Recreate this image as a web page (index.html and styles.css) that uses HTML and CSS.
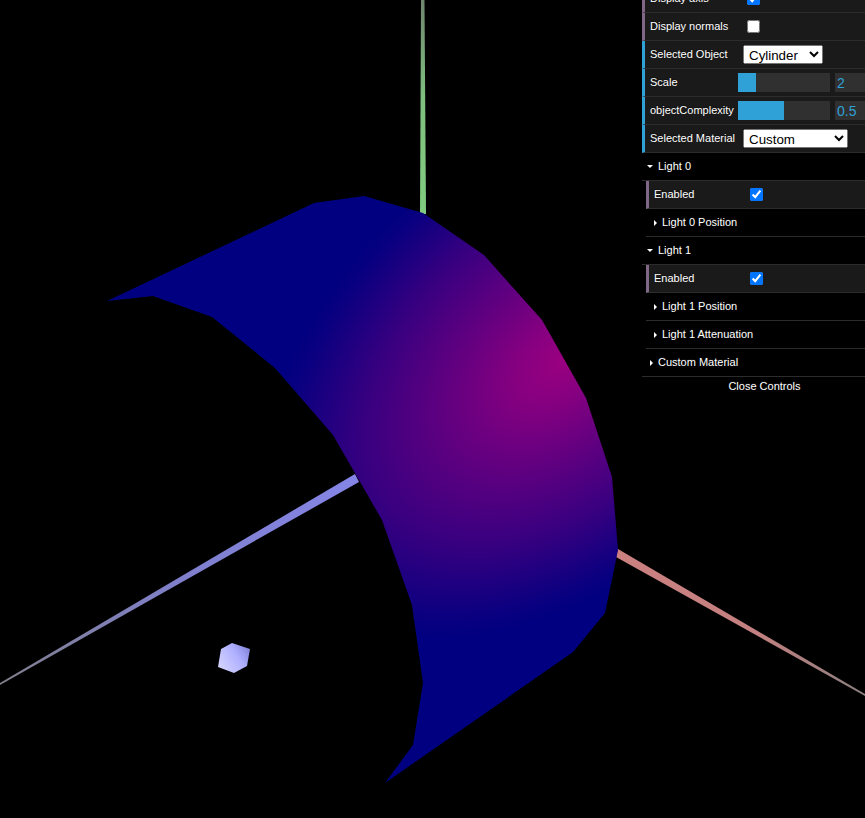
FILE: index.html
```html
<!DOCTYPE html>
<html lang="en">
<head>
<meta charset="utf-8">
<title>Cylinder scene</title>
<link rel="stylesheet" href="styles.css">
</head>
<body>
<svg class="scene" viewBox="0 0 865 818" width="865" height="818" aria-label="3D scene">
  <defs>
    <linearGradient id="axisY" gradientUnits="userSpaceOnUse" x1="423" y1="214" x2="423" y2="0">
      <stop offset="0" stop-color="#80cc80"/>
      <stop offset="0.55" stop-color="#7fbf7f"/>
      <stop offset="1" stop-color="#6f866f"/>
    </linearGradient>
    <linearGradient id="axisZ" gradientUnits="userSpaceOnUse" x1="358" y1="477" x2="0" y2="684">
      <stop offset="0" stop-color="#8585e8"/>
      <stop offset="0.5" stop-color="#7f7fcc"/>
      <stop offset="1" stop-color="#80808c"/>
    </linearGradient>
    <linearGradient id="axisX" gradientUnits="userSpaceOnUse" x1="618" y1="551" x2="865" y2="694">
      <stop offset="0" stop-color="#cc8080"/>
      <stop offset="0.55" stop-color="#c48080"/>
      <stop offset="1" stop-color="#8c8080"/>
    </linearGradient>
    <radialGradient id="sheen" gradientUnits="userSpaceOnUse" cx="0" cy="0" r="1" gradientTransform="translate(562 360) rotate(140) scale(350 222)">
      <stop offset="0" stop-color="#990080"/>
      <stop offset="0.15" stop-color="#860080"/>
      <stop offset="0.4" stop-color="#5e0080"/>
      <stop offset="0.65" stop-color="#380080"/>
      <stop offset="0.82" stop-color="#1a0080"/>
      <stop offset="0.93" stop-color="#070080"/>
      <stop offset="1" stop-color="#000080"/>
    </radialGradient>
    <linearGradient id="cube" gradientUnits="userSpaceOnUse" x1="222" y1="668" x2="250" y2="650">
      <stop offset="0" stop-color="#d0d0ff"/>
      <stop offset="0.6" stop-color="#aeaeff"/>
      <stop offset="1" stop-color="#8484dc"/>
    </linearGradient>
  </defs>
  <polygon points="421,0 424.5,0 426,214 420,214" fill="url(#axisY)"/>
  <polygon points="355,474 359,482 0,685 0,683" fill="url(#axisZ)"/>
  <polygon points="618,549 616,557 865,696 865,694" fill="url(#axisX)"/>
  <polygon fill="url(#sheen)" points="107,301 314,203 364,196 423,213 484,255 542,320 586,398 612,477 618,550 605,613 573,652 385,783 413,745 423,683 412,605 382,520 333,435 275,368 212,317 153,296"/>
  <polygon fill="url(#cube)" points="232,643 250,649 247,666 234,673 218,667 221,649"/>
</svg>

<div class="gui">
  <div class="row row-bool row-clipped"><span class="label">Display axis</span><input type="checkbox" class="check" checked></div>
  <div class="row row-bool"><span class="label">Display normals</span><input type="checkbox" class="check"></div>
  <div class="row row-pick"><span class="label">Selected Object</span><select class="select select-object"><option>Cylinder</option></select></div>
  <div class="row row-num"><span class="label">Scale</span><div class="slider"><div class="fill fill-scale"></div></div><div class="num">2</div></div>
  <div class="row row-num"><span class="label">objectComplexity</span><div class="slider"><div class="fill fill-complexity"></div></div><div class="num">0.5</div></div>
  <div class="row row-pick"><span class="label">Selected Material</span><select class="select select-material"><option>Custom</option></select></div>

  <div class="title"><span class="arrow-down"></span><span class="title-text">Light 0</span></div>
  <div class="nested">
    <div class="row row-bool"><span class="label">Enabled</span><input type="checkbox" class="check" checked></div>
    <div class="title"><span class="arrow-right"></span><span class="title-text">Light 0 Position</span></div>
  </div>

  <div class="title"><span class="arrow-down"></span><span class="title-text">Light 1</span></div>
  <div class="nested">
    <div class="row row-bool"><span class="label">Enabled</span><input type="checkbox" class="check" checked></div>
    <div class="title"><span class="arrow-right"></span><span class="title-text">Light 1 Position</span></div>
    <div class="title"><span class="arrow-right"></span><span class="title-text">Light 1 Attenuation</span></div>
  </div>

  <div class="title"><span class="arrow-right"></span><span class="title-text">Custom Material</span></div>
  <div class="close">Close Controls</div>
</div>
</body>
</html>
```
FILE: styles.css
```css
html, body {
  margin: 0;
  height: 100%;
  overflow: hidden;
  background: #000;
}

.scene {
  display: block;
}

.gui {
  position: absolute;
  top: -15px;
  left: 642px;
  width: 245px;
  font: 11px "Liberation Sans", Arial, sans-serif;
  color: #fff;
  text-shadow: 0 -1px 0 #111;
}

.row {
  box-sizing: border-box;
  height: 28px;
  display: flex;
  align-items: center;
  background: #1a1a1a;
  border-bottom: 1px solid #2c2c2c;
  border-left: 3px solid #806787;
  padding-left: 5px;
}

.row-num, .row-pick {
  border-left-color: #2fa1d6;
}

.label {
  width: 88px;
  flex: none;
  margin-bottom: 2px;
  white-space: nowrap;
}

.row-bool .label {
  width: 97px;
}

.nested .row-bool .label {
  width: 96px;
}

.check {
  margin: 0;
  width: 13px;
  height: 13px;
}

.select {
  margin: 0 0 0 5px;
  box-sizing: border-box;
  height: 19px;
  font: 13.33px "Liberation Sans", Arial, sans-serif;
  padding: 1px 0 0 1px;
}

.select-object { width: 80px; }
.select-material { width: 105px; }

.slider {
  width: 92px;
  height: 19px;
  background: #303030;
  flex: none;
}

.fill {
  height: 100%;
  background: #2fa1d6;
}

.fill-scale { width: 18px; }
.fill-complexity { width: 46px; }

.num {
  box-sizing: border-box;
  margin-left: 5px;
  width: 60px;
  height: 19px;
  line-height: 21px;
  padding-left: 2px;
  background: #303030;
  color: #2fa1d6;
  font-size: 14px;
  text-shadow: none;
}

.title {
  box-sizing: border-box;
  height: 28px;
  display: flex;
  align-items: center;
  gap: 5px;
  padding-left: 5px;
  background: #000;
  border-bottom: 1px solid #2c2c2c;
}

.title-text {
  margin-bottom: 2px;
}

.nested {
  margin-left: 4px;
}

.arrow-down {
  width: 0;
  height: 0;
  border-left: 3px solid transparent;
  border-right: 3px solid transparent;
  border-top: 3px solid #fff;
}

.arrow-right {
  width: 0;
  height: 0;
  margin-left: 3px;
  border-top: 3px solid transparent;
  border-bottom: 3px solid transparent;
  border-left: 3px solid #fff;
}

.close {
  height: 20px;
  line-height: 19px;
  text-align: center;
}
```
